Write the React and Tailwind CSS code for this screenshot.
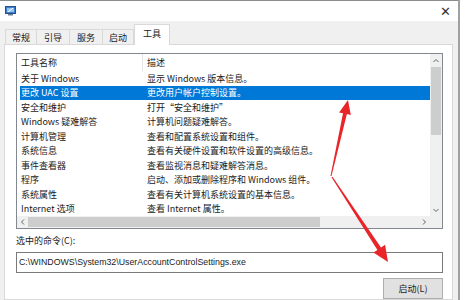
import React from 'react'

const tabs = ['常规', '引导', '服务', '启动', '工具']
const tabWidths = ['w-[32px]', 'w-[34px]', 'w-[34px]', 'w-[32px]', 'w-[36px]']

const tools = [
  ['关于 Windows', '显示 Windows 版本信息。'],
  ['更改 UAC 设置', '更改用户帐户控制设置。'],
  ['安全和维护', '打开“安全和维护”'],
  ['Windows 疑难解答', '计算机问题疑难解答。'],
  ['计算机管理', '查看和配置系统设置和组件。'],
  ['系统信息', '查看有关硬件设置和软件设置的高级信息。'],
  ['事件查看器', '查看监视消息和疑难解答消息。'],
  ['程序', '启动、添加或删除程序和 Windows 组件。'],
  ['系统属性', '查看有关计算机系统设置的基本信息。'],
  ['Internet 选项', '查看 Internet 属性。'],
]

function AppIcon() {
  return (
    <svg width="11" height="10" viewBox="0 0 11 10">
      <rect x="0.5" y="0.5" width="10" height="7" fill="#3b7fd1" stroke="#2a4f86" />
      <rect x="2" y="2" width="7" height="4" fill="#8ec3f2" />
      <path d="M3 6 L8 2" stroke="#ffffff" strokeWidth="1" />
      <rect x="3" y="8" width="5" height="1.5" fill="#6b7c93" />
    </svg>
  )
}

function Chevron({ d }) {
  return (
    <svg width="6" height="6" viewBox="0 0 6 6">
      <path d={d} stroke="#606060" fill="none" />
    </svg>
  )
}

function Arrows() {
  return (
    <svg className="absolute left-0 top-0 pointer-events-none" width="465" height="300">
      <polygon
        fill="#e8262a"
        points="330.5,175.9 343.0,113.2 339.1,112.4 348,100 350.8,115.0 346.9,114.1 331.5,176.1"
      />
      <polygon
        fill="#e8262a"
        points="332.5,176.7 381.0,247.4 385.1,244.8 388,262 373.4,252.5 377.4,249.9 331.5,177.3"
      />
    </svg>
  )
}

export default function App() {
  return (
    <div className="relative w-[465px] h-[300px] overflow-hidden bg-white font-['Noto_Sans_CJK_SC',sans-serif] text-[9px] leading-none text-[#1a1a1a]">
      <div className="flex h-full">
        <div className="w-[460px] h-full border-r-2 border-[#a0a0a0] flex flex-col">
          {/* title bar */}
          <div className="h-[21px] border-t border-[#8c8c8c] bg-white flex items-center justify-between pl-[5px] pr-[7px]">
            <AppIcon />
            <span className="text-[13px] text-[#333] leading-none font-['DejaVu_Sans',sans-serif]">✕</span>
          </div>

          <div className="flex-1 bg-[#f0f0f0] flex flex-col">
            {/* tabs */}
            <div className="h-[23px] flex items-end pl-[5px] relative z-10">
              {tabs.map((t, i) => {
                const sel = i === tabs.length - 1
                return (
                  <div
                    key={t}
                    className={`${tabWidths[i]} flex items-center justify-center border border-[#d9d9d9] ${
                      sel ? 'h-[21px] bg-white border-b-0 -mb-px pb-[3px]' : 'h-[15px] border-b-0 bg-[#f0f0f0] -ml-px first:ml-0'
                    }`}
                  >
                    {t}
                  </div>
                )
              })}
            </div>

            {/* tab page */}
            <div className="ml-[4px] w-[449px] flex-1 bg-white border border-[#d9d9d9] pl-[11px] pt-[8px]">
              {/* list view */}
              <div className="w-[427px] h-[176px] border border-[#828790] flex flex-col">
                <div className="flex h-[162px]">
                  <div className="flex-1 overflow-hidden">
                    <div className="h-[17px] flex items-center">
                      <div className="w-[126px] h-full border-r border-[#e5e5e5] pl-[4px] flex items-center">工具名称</div>
                      <div className="pl-[4px]">描述</div>
                    </div>
                    {tools.map(([name, desc], i) => (
                      <div
                        key={name}
                        className={`ml-[3px] h-[14.5px] flex items-center whitespace-nowrap ${
                          i === 1 ? 'bg-[#0078d7] text-white' : ''
                        }`}
                      >
                        <div className="w-[124px] shrink-0 pl-[1px]">{name}</div>
                        <div className="pl-[3px]">{desc}</div>
                      </div>
                    ))}
                  </div>
                  {/* vertical scrollbar */}
                  <div className="w-[12px] bg-[#f0f0f0] flex flex-col">
                    <div className="h-[13px] flex items-center justify-center">
                      <Chevron d="M0.5 4 L3 1.5 L5.5 4" />
                    </div>
                    <div className="h-[68px] mx-[1px] bg-[#cdcdcd]" />
                    <div className="flex-1" />
                    <div className="h-[13px] flex items-center justify-center">
                      <Chevron d="M0.5 2 L3 4.5 L5.5 2" />
                    </div>
                  </div>
                </div>
                {/* horizontal scrollbar */}
                <div className="h-[12px] flex bg-[#f0f0f0]">
                  <div className="w-[11px] flex items-center justify-center">
                    <Chevron d="M4 0.5 L1.5 3 L4 5.5" />
                  </div>
                  <div className="w-[292px] my-[1px] bg-[#cdcdcd]" />
                  <div className="flex-1" />
                  <div className="w-[11px] flex items-center justify-center">
                    <Chevron d="M2 0.5 L4.5 3 L2 5.5" />
                  </div>
                  <div className="w-[13px]" />
                </div>
              </div>

              <div className="mt-[5px] h-[13px] flex items-center">选中的命令(C):</div>

              <div className="mt-[5px] w-[427px] h-[21px] border border-[#7a7a7a] flex items-center pl-[2px] font-['Liberation_Sans',sans-serif] text-[8.8px]">
                C:\WINDOWS\System32\UserAccountControlSettings.exe
              </div>

              <div className="mt-[5px] w-[427px] flex justify-end">
                <div className="w-[60px] h-[21px] bg-[#e1e1e1] border border-[#adadad] flex items-center justify-center">
                  启动(L)
                </div>
              </div>
            </div>
          </div>
        </div>
        <div className="flex-1 bg-white" />
      </div>
      <Arrows />
    </div>
  )
}
